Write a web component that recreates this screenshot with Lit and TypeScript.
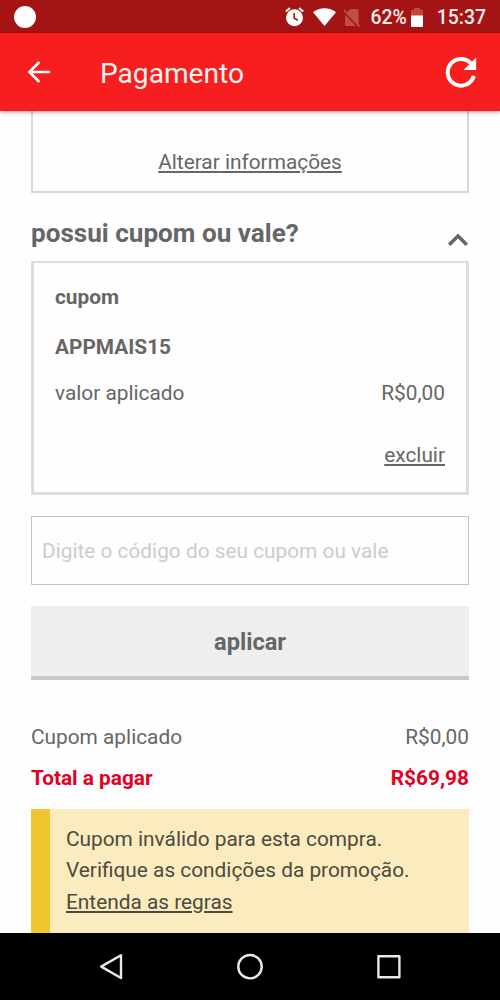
import { LitElement, html, css } from "lit";
import { customElement, property } from "lit/decorators.js";

@customElement("status-bar")
class StatusBar extends LitElement {
  static styles = css`
    :host { display: block; flex: none; }
    .bar {
      height: 33px; background: #a51414; color: #fdeeee; display: flex;
      align-items: center; font-size: 19.4px; font-weight: 500; box-sizing: border-box;
      padding: 1px 14px 0 13px;
    }
    .dot { width: 22px; height: 22px; border-radius: 50%; background: #fff; margin-left: 1px; margin-top: -1px; }
    .space { flex: 1; }
    svg { display: block; flex: none; }
    .alarm { margin-right: 9px; }
    .wifi { margin-right: 7px; }
    .sim { margin-right: 10px; }
    .battery { margin-left: 4px; margin-right: 14px; }
    .label { line-height: 32px; padding-top: 2px; }
  `;
  render() {
    return html`<div class="bar">
      <div class="dot"></div>
      <div class="space"></div>
      <svg class="alarm" width="19" height="20" viewBox="0 0 19 20">
        <path d="M.8 4.6 5 1.1M14 1.1l4.2 3.5" stroke="#fff" stroke-width="1.9" fill="none" />
        <circle cx="9.5" cy="10.7" r="8.5" fill="#fff" />
        <path d="M9.2 6v5.2l3.6 2.1" stroke="#a51414" stroke-width="1.6" fill="none" />
      </svg>
      <svg class="wifi" width="23" height="18" viewBox="0 0 23 18">
        <path d="M0 4.2C6.7-1.1 16.3-1.1 23 4.2L11.5 18z" fill="#fff" />
      </svg>
      <svg class="sim" width="17" height="19" viewBox="0 0 17 19">
        <path d="M7.3 1H14q1.6 0 1.6 1.6V18H3.6q-1.6 0-1.6-1.6V6.3z" fill="#be4d4d" />
        <path d="M0 2.8 15.6 19.2" stroke="#a51414" stroke-width="2.2" />
        <path d="M.8 2 16.5 18.3" stroke="#be4d4d" stroke-width="1.8" />
      </svg>
      <span class="label">62%</span>
      <svg class="battery" width="12" height="19" viewBox="0 0 12 19">
        <path d="M3 0h6v2h3v6H0V2h3z" fill="#c04545" />
        <path d="M0 7.6h12V18q0 1-1 1H1q-1 0-1-1z" fill="#fff" />
      </svg>
      <span class="label">15:37</span>
    </div>`;
  }
}

@customElement("app-header")
class AppHeader extends LitElement {
  @property() heading = "";
  static styles = css`
    :host { display: block; flex: none; z-index: 1; }
    .header {
      height: 78px; box-sizing: border-box; padding: 0 23px 0 27px; background: #f61e1f;
      box-shadow: 0 1px 4px rgba(70, 0, 20, 0.45); display: flex; align-items: center;
    }
    .title { flex: 1; margin-left: 49px; padding-top: 3px; color: #fff4f0; font-size: 28.1px; line-height: 34px; }
    svg { display: block; flex: none; }
  `;
  render() {
    return html`<div class="header">
      <svg width="24" height="24" viewBox="0 0 24 24">
        <path d="M23.2 12H2.6M12.4 2 2.4 12l10 10" fill="none" stroke="#fff" stroke-width="2.6" />
      </svg>
      <div class="title">${this.heading}</div>
      <svg width="32" height="32" viewBox="0 0 32 32">
        <path d="M26.1 7.2A13.3 13.3 0 1 0 29 19.6" transform="translate(-.2 .3)" fill="none" stroke="#fff" stroke-width="4" />
        <path d="M31.2 1.4V14H18.6z" fill="#fff" />
      </svg>
    </div>`;
  }
}

@customElement("value-row")
class ValueRow extends LitElement {
  @property() label = "";
  @property() value = "";
  static styles = css`
    :host { display: block; }
    .row { display: flex; justify-content: space-between; line-height: 30px; }
  `;
  render() {
    return html`<div class="row"><span>${this.label}</span><span>${this.value}</span></div>`;
  }
}

@customElement("nav-bar")
class NavBar extends LitElement {
  static styles = css`
    :host { display: block; flex: none; }
    .nav { height: 67px; background: #000; display: flex; align-items: center; justify-content: space-between; padding: 0 97px; }
    svg { display: block; fill: none; stroke: #e9e9e9; stroke-width: 2.4; stroke-linejoin: round; }
  `;
  render() {
    return html`<div class="nav">
      <svg width="28" height="28" viewBox="0 0 28 28"><path d="M4.2 13.6 24 2.2V25z" /></svg>
      <svg width="28" height="28" viewBox="0 0 28 28"><circle cx="14" cy="13.7" r="11.7" /></svg>
      <svg width="28" height="28" viewBox="0 0 28 28"><path d="M3.4 3.2h21v21h-21z" /></svg>
    </div>`;
  }
}

@customElement("app-root")
class AppRoot extends LitElement {
  static styles = css`
    :host {
      display: flex; flex-direction: column; height: 1000px; overflow: hidden; background: #fefefe;
      font-family: Roboto, "Liberation Sans", sans-serif; font-size: 20.83px; color: #666;
    }
    .page { flex: 1; min-height: 0; overflow: hidden; padding: 0 31px; display: flex; flex-direction: column; }
    .page > * { flex: none; }
    .link { text-decoration: underline; text-decoration-thickness: 1.5px; text-underline-offset: 2px; }
    .info { height: 82px; box-sizing: border-box; border: 2px solid #d8d8d8; border-top: 0; text-align: center; padding-top: 36px; line-height: 30px; }
    .section { display: flex; justify-content: space-between; align-items: flex-start; height: 68px; padding-top: 24px; box-sizing: border-box; }
    .section h2 { margin: 0; font-size: 26.1px; line-height: 32px; font-weight: 700; }
    .chevron { display: block; margin-top: 15px; }
    .coupon { height: 234px; box-sizing: border-box; border: 3px solid #ddd; border-top-width: 2px; padding: 19px 21px 0; line-height: 30px; }
    .strong { font-weight: 700; }
    .code { margin: 20px 0 16px; }
    .remove { margin-top: 32px; text-align: right; }
    .entry {
      display: block; width: 100%; height: 69px; box-sizing: border-box; margin: 21px 0; border: 1px solid #c4c4c4;
      border-radius: 0; background: #fefefe; padding: 0 10px; font: inherit; color: #666; outline: none;
    }
    .entry::placeholder { color: #ccc; opacity: 1; }
    .apply {
      display: block; width: 100%; height: 74px; border: 0; border-bottom: 4px solid #c8c8c8; background: #eee;
      padding: 2px 0 0; font: 700 23.6px Roboto, "Liberation Sans", sans-serif; color: #666;
    }
    .totals { margin-top: 42px; }
    .total { margin-top: 11px; font-weight: 700; color: #e2001f; }
    .alert { margin-top: 16px; height: 140px; border-left: 19px solid #efc530; background: #faecbe; padding: 15px 16px; color: #4d4a40; line-height: 31.25px; }
  `;
  render() {
    return html`
      <status-bar></status-bar>
      <app-header heading="Pagamento"></app-header>
      <main class="page">
        <div class="info"><span class="link">Alterar informações</span></div>
        <div class="section">
          <h2>possui cupom ou vale?</h2>
          <svg class="chevron" width="22" height="15" viewBox="0 0 22 15">
            <path d="M2.2 12.8 11 4l8.8 8.8" fill="none" stroke="#666" stroke-width="3.4" />
          </svg>
        </div>
        <div class="coupon">
          <div class="strong">cupom</div>
          <div class="strong code">APPMAIS15</div>
          <value-row label="valor aplicado" value="R$0,00"></value-row>
          <div class="remove"><span class="link">excluir</span></div>
        </div>
        <input class="entry" placeholder="Digite o código do seu cupom ou vale" />
        <button class="apply">aplicar</button>
        <value-row class="totals" label="Cupom aplicado" value="R$0,00"></value-row>
        <value-row class="total" label="Total a pagar" value="R$69,98"></value-row>
        <div class="alert">
          <div>Cupom inválido para esta compra.</div>
          <div>Verifique as condições da promoção.</div>
          <span class="link">Entenda as regras</span>
        </div>
      </main>
      <nav-bar></nav-bar>
    `;
  }
}
